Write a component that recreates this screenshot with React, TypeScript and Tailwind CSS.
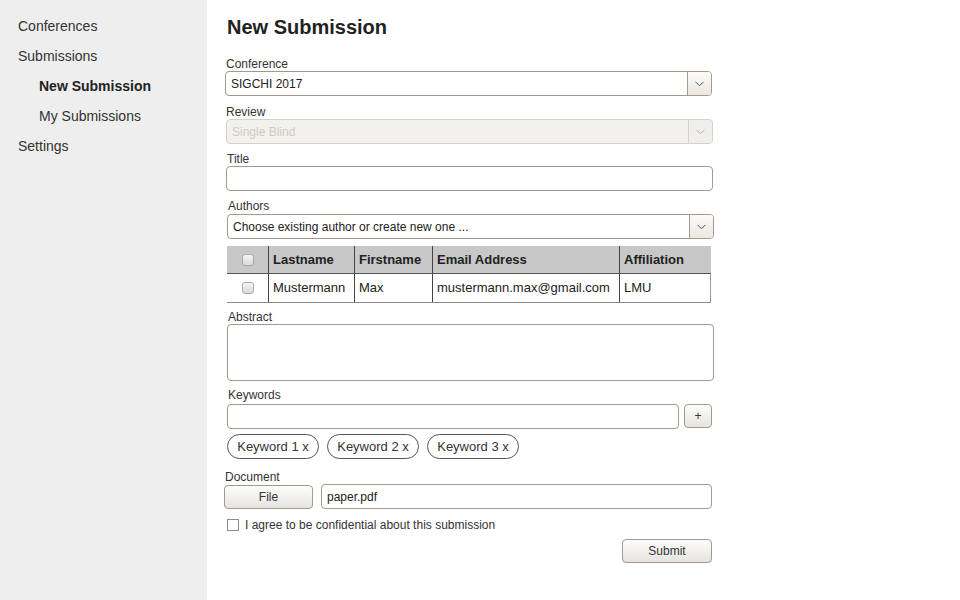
import React from 'react'

const font = "font-['Liberation_Sans',Arial,Helvetica,sans-serif]"

function Chevron({ faded = false }: { faded?: boolean }) {
  return (
    <svg width="9" height="6" viewBox="0 0 9 6" className="block">
      <polyline
        points="0.5,0.8 4.5,4.8 8.5,0.8"
        fill="none"
        stroke={faded ? '#b5b1aa' : '#555'}
        strokeWidth="1"
      />
    </svg>
  )
}

function Label({ children, className = '' }: { children: React.ReactNode; className?: string }) {
  return <div className={`h-[14px] text-[12px] leading-[16px] text-[#333] ${className}`}>{children}</div>
}

function Select({ value, disabled = false, className = '' }: { value: string; disabled?: boolean; className?: string }) {
  return (
    <div
      className={`flex h-[25px] rounded-[4px] border ${
        disabled ? 'border-[#d6d2ca] bg-[#f3f1ed]' : 'border-[#a39a8c] bg-white'
      } ${className}`}
    >
      <div className={`flex flex-1 items-center px-[5px] text-[12px] ${disabled ? 'text-[#cfcbc4]' : 'text-[#222]'}`}>
        {value}
      </div>
      <div
        className={`flex w-[24px] items-center justify-center rounded-r-[3px] border-l ${
          disabled
            ? 'border-[#d6d2ca] bg-[#f1efeb]'
            : 'border-[#a39a8c] bg-gradient-to-b from-[#fbfaf8] to-[#ebe8e2]'
        }`}
      >
        <Chevron faded={disabled} />
      </div>
    </div>
  )
}

function Button({ children, className = '' }: { children: React.ReactNode; className?: string }) {
  return (
    <button
      className={`flex items-center justify-center rounded-[4px] border border-[#a39a8c] bg-gradient-to-b from-[#fdfdfc] to-[#e6e4e0] text-[12px] text-[#333] ${className}`}
    >
      {children}
    </button>
  )
}

function TableCheck() {
  return (
    <div className="h-[12px] w-[12px] rounded-[3px] border border-[#a9a9a9] bg-gradient-to-b from-[#f6f6f6] to-[#d9d9d9]" />
  )
}

const menu = [
  { label: 'Conferences', sub: false },
  { label: 'Submissions', sub: false },
  { label: 'New Submission', sub: true, active: true },
  { label: 'My Submissions', sub: true },
  { label: 'Settings', sub: false },
]

const keywords = ['Keyword 1 x', 'Keyword 2 x', 'Keyword 3 x']

export default function App() {
  return (
    <div className={`flex h-[600px] w-[960px] overflow-hidden bg-white ${font}`}>
      {/* Sidebar */}
      <nav className="w-[207px] shrink-0 bg-[#eeeeee] pt-[11px]">
        {menu.map((item) => (
          <div
            key={item.label}
            className={`h-[30px] text-[14px] leading-[30px] ${item.sub ? 'pl-[39px]' : 'pl-[18px]'} ${
              item.active ? 'font-bold text-[#222]' : 'text-[#333]'
            }`}
          >
            {item.label}
          </div>
        ))}
      </nav>

      {/* Main */}
      <main className="flex-1 pl-[20px] pt-[15px]">
        <h1 className="text-[20px] font-bold leading-[24px] text-[#222]">New Submission</h1>

        <div className="w-[489px]">
          <Label className="mt-[17px] -ml-[1px]">Conference</Label>
          <Select value="SIGCHI 2017" className="mt-[1px] -ml-[2px] w-[487px]" />

          <Label className="mt-[8px] -ml-[1px]">Review</Label>
          <Select value="Single Blind" disabled className="mt-[1px] -ml-[1px] w-[487px]" />

          <Label className="mt-[7px]">Title</Label>
          <div className="mt-[1px] -ml-[1px] h-[25px] w-[487px] rounded-[4px] border border-[#a39a8c] bg-white" />

          <Label className="mt-[7px] ml-[1px]">Authors</Label>
          <Select value="Choose existing author or create new one ..." className="mt-[2px] w-[487px]" />

          {/* Authors table */}
          <div className="mt-[7px] w-[484px] text-[13px] text-[#222]">
            <div className="flex h-[28px] border-b border-[#555] bg-[#c8c8c8] font-bold">
              <div className="flex w-[42px] items-center justify-center border-r border-[#444]">
                <TableCheck />
              </div>
              <div className="flex w-[86px] items-center border-r border-[#444] pl-[4px]">Lastname</div>
              <div className="flex w-[78px] items-center border-r border-[#444] pl-[4px]">Firstname</div>
              <div className="flex w-[187px] items-center border-r border-[#444] pl-[4px]">Email Address</div>
              <div className="flex flex-1 items-center pl-[4px]">Affiliation</div>
            </div>
            <div className="flex h-[29px] border-b border-r border-b-[#8a8a8a] border-r-[#9a9a9a] bg-white">
              <div className="flex w-[42px] items-center justify-center border-r border-[#444]">
                <TableCheck />
              </div>
              <div className="flex w-[86px] items-center border-r border-[#444] pl-[4px]">Mustermann</div>
              <div className="flex w-[78px] items-center border-r border-[#444] pl-[4px]">Max</div>
              <div className="flex w-[187px] items-center border-r border-[#444] pl-[4px]">mustermann.max@gmail.com</div>
              <div className="flex flex-1 items-center pl-[4px]">LMU</div>
            </div>
          </div>

          <Label className="mt-[6px] ml-[1px]">Abstract</Label>
          <div className="mt-[1px] h-[57px] w-[487px] rounded-[4px] border border-[#a39a8c] bg-white" />

          <Label className="mt-[6px] ml-[1px]">Keywords</Label>
          <div className="mt-[3px] flex gap-[5px]">
            <div className="h-[25px] w-[452px] rounded-[4px] border border-[#a39a8c] bg-white" />
            <Button className="h-[24px] w-[28px] text-[11px]">+</Button>
          </div>

          <div className="mt-[5px] flex gap-[8px]">
            {keywords.map((k) => (
              <div
                key={k}
                className="flex h-[25px] w-[92px] items-center justify-center rounded-full border border-[#555] text-[13px] text-[#333]"
              >
                {k}
              </div>
            ))}
          </div>

          <Label className="mt-[10px] -ml-[2px]">Document</Label>
          <div className="mt-[1px] -ml-[3px] flex items-center gap-[8px]">
            <Button className="h-[24px] w-[89px]">File</Button>
            <div className="flex h-[25px] w-[391px] items-center rounded-[4px] border border-[#a39a8c] bg-white px-[5px] text-[12px] text-[#222]">
              paper.pdf
            </div>
          </div>

          <div className="mt-[7px] flex items-center gap-[6px]">
            <div className="h-[12px] w-[12px] border border-[#8a8a8a] bg-white" />
            <span className="text-[12px] text-[#333]">I agree to be confidential about this submission</span>
          </div>

          <div className="mt-[5px] flex w-[485px] justify-end">
            <Button className="h-[24px] w-[90px]">Submit</Button>
          </div>
        </div>
      </main>
    </div>
  )
}
